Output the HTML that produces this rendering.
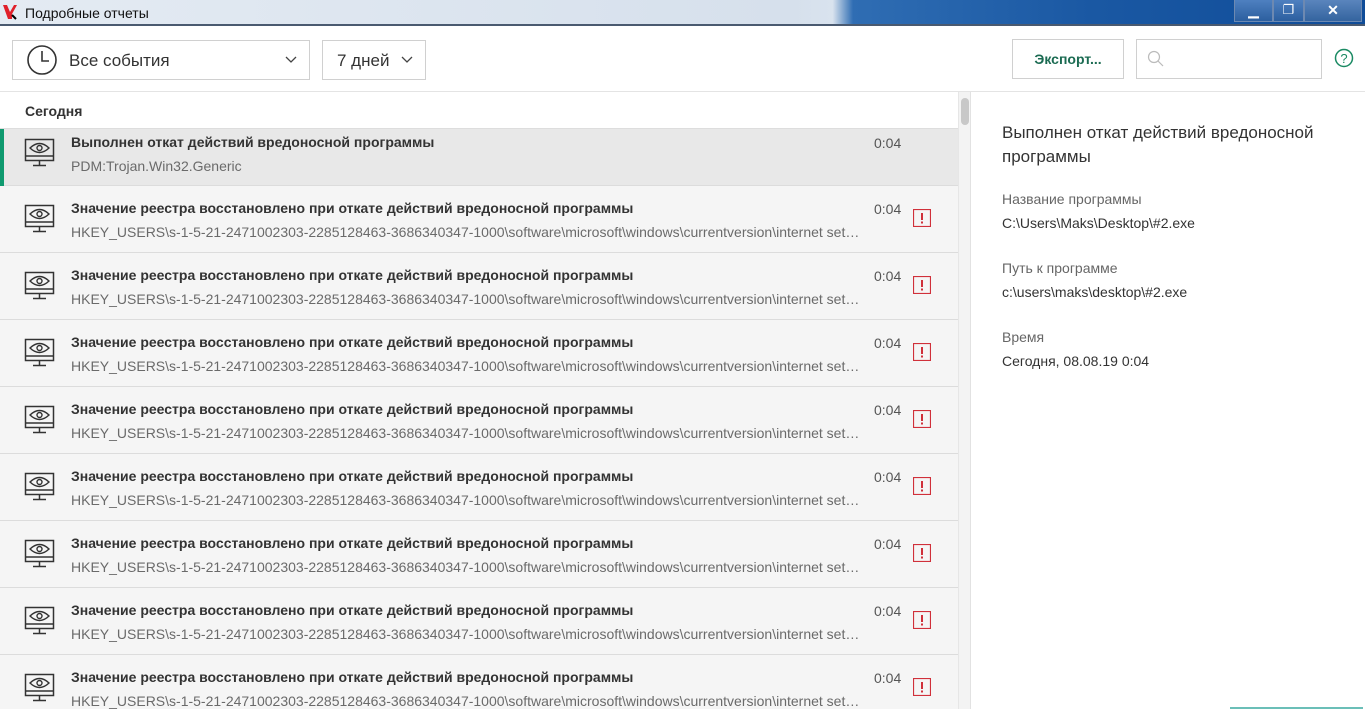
<!DOCTYPE html>
<html><head><meta charset="utf-8"><style>
*{margin:0;padding:0;box-sizing:border-box}
html,body{width:1365px;height:709px;overflow:hidden}
body{background:#fff;font-family:"Liberation Sans",sans-serif;position:relative;color:#333}
.abs{position:absolute}
#title{left:0;top:0;width:1365px;height:26px;background:linear-gradient(90deg,#e4ebf3 0,#d6e0ec 58%,#d9e3ee 61%,#2f6db3 62.5%,#1a58a3 80%,#0f4c98 100%);border-bottom:2px solid #4a5a70}
.wb{top:0;height:22px;border:1px solid #6d89b1;border-top:none;background:linear-gradient(#4e80c0,#2c5f9f);color:#fff;text-align:center;font-size:14px;line-height:20px}
.box{border:1px solid #d0d0d0;background:#fff}
.row{position:absolute;left:0;width:958px;height:67px;background:#f5f5f5;border-bottom:1px solid #dcdcdc}
.t1{position:absolute;left:71px;top:14px;font-size:14px;font-weight:bold;color:#333;white-space:nowrap}
.t2{position:absolute;left:71px;top:38px;font-size:14px;color:#6a6a6a;white-space:nowrap;width:790px;overflow:hidden;text-overflow:ellipsis}
.tm{position:absolute;left:874px;top:15px;font-size:14px;color:#555}
.ex{position:absolute;left:913px;top:23px}
.ic{position:absolute;left:24px;top:17px}
.lbl{font-size:14px;color:#666}
.val{font-size:14px;color:#333}
</style></head><body>
<div id="title" class="abs"></div>
<div class="abs" style="left:2px;top:4px;width:16px;height:16px"><svg width="16" height="16"><path d="M1 1h4l3 7 4-7h3l-5 9v5H6z" fill="#e0202a"/><path d="M10 11l4 4" stroke="#000" stroke-width="2"/></svg></div>
<div class="abs" style="left:25px;top:5px;font-size:14px;color:#111">Подробные отчеты</div>
<div class="abs wb" style="left:1234px;width:39px">▁</div>
<div class="abs wb" style="left:1273px;width:31px;font-size:13px">❐</div>
<div class="abs wb" style="left:1304px;width:58px;background:linear-gradient(#5a85bd,#34649f);font-weight:bold">✕</div>

<div class="abs box" style="left:12px;top:40px;width:298px;height:40px"></div>
<svg class="abs" style="left:26px;top:44px" width="32" height="32"><circle cx="16" cy="16" r="14" fill="none" stroke="#333" stroke-width="1.6"/><path d="M16 7v10h7" fill="none" stroke="#333" stroke-width="1.6"/></svg>
<div class="abs" style="left:69px;top:51px;font-size:17px;color:#333">Все события</div>
<svg class="abs" style="left:285px;top:56px" width="12" height="8"><path d="M1 1l5 5 5-5" fill="none" stroke="#444" stroke-width="1.3"/></svg>
<div class="abs box" style="left:322px;top:40px;width:104px;height:40px"></div>
<div class="abs" style="left:337px;top:51px;font-size:17px;color:#333">7 дней</div>
<svg class="abs" style="left:401px;top:56px" width="12" height="8"><path d="M1 1l5 5 5-5" fill="none" stroke="#444" stroke-width="1.3"/></svg>
<div class="abs box" style="left:1012px;top:39px;width:112px;height:40px;text-align:center;line-height:38px;font-size:14px;color:#1b6b52;font-weight:bold">Экспорт...</div>
<div class="abs box" style="left:1136px;top:39px;width:186px;height:40px"></div>
<svg class="abs" style="left:1147px;top:50px" width="18" height="18"><circle cx="7" cy="7" r="5.5" fill="none" stroke="#bbb" stroke-width="1.2"/><path d="M11 11l5 5" stroke="#bbb" stroke-width="1.2"/></svg>
<svg class="abs" style="left:1334px;top:48px" width="20" height="20"><circle cx="10" cy="10" r="8.5" fill="none" stroke="#1a8a63" stroke-width="1.5"/><text x="10" y="15" text-anchor="middle" font-size="13" fill="#1a8a63" font-family="Liberation Sans">?</text></svg>
<div class="abs" style="left:0;top:91px;width:1365px;height:1px;background:#e4e4e4"></div>

<div class="abs" style="left:25px;top:103px;font-size:14px;font-weight:bold;color:#333">Сегодня</div>
<div class="abs" style="left:958px;top:92px;width:13px;height:617px;background:#f3f3f3;border-left:1px solid #e6e6e6;border-right:1px solid #e2e2e2"></div>
<div class="abs" style="left:961px;top:98px;width:8px;height:27px;background:#c8c8c8;border-radius:4px"></div>

<div class="row" style="top:128px;height:58px;background:#e8e8e8;border-top:1px solid #ddd">
<div class="abs" style="left:0;top:0;width:4px;height:57px;background:#0f9a6f"></div>
<svg class="ic" style="top:8px" width="32" height="32"><rect x="1.5" y="2.5" width="28" height="21" fill="none" stroke="#333" stroke-width="1.5"/><path d="M1.5 19h28M15.5 24v4M9 28.5h13" stroke="#333" stroke-width="1.5"/><path d="M6 11q9.5-9 19 0q-9.5 9-19 0z" fill="none" stroke="#333" stroke-width="1.4"/><circle cx="15.5" cy="11" r="2.5" fill="none" stroke="#333" stroke-width="1.4"/></svg>
<div class="t1" style="top:5px">Выполнен откат действий вредоносной программы</div>
<div class="t2" style="top:29px">PDM:Trojan.Win32.Generic</div>
<div class="tm" style="top:6px">0:04</div>
</div>

<div id="rows"></div>
<script>
var h='';for(var i=0;i<8;i++){var t=186+i*67;h+='<div class="row" style="top:'+t+'px"><svg class="ic" width="32" height="32"><rect x="1.5" y="2.5" width="28" height="21" fill="none" stroke="#333" stroke-width="1.5"/><path d="M1.5 19h28M15.5 24v4M9 28.5h13" stroke="#333" stroke-width="1.5"/><path d="M6 11q9.5-9 19 0q-9.5 9-19 0z" fill="none" stroke="#333" stroke-width="1.4"/><circle cx="15.5" cy="11" r="2.5" fill="none" stroke="#333" stroke-width="1.4"/></svg><div class="t1">Значение реестра восстановлено при откате действий вредоносной программы</div><div class="t2">HKEY_USERS\\s-1-5-21-2471002303-2285128463-3686340347-1000\\software\\microsoft\\windows\\currentversion\\internet settings</div><div class="tm">0:04</div><svg class="ex" width="18" height="18"><rect x="0.5" y="0.5" width="17" height="17" fill="none" stroke="#d0303a" stroke-width="1.2"/><rect x="8" y="4" width="2" height="7" fill="#d0303a"/><rect x="8" y="12.5" width="2" height="2" fill="#d0303a"/></svg></div>';}
document.getElementById('rows').innerHTML=h;
</script>

<div class="abs" style="left:1002px;top:121px;font-size:17px;color:#333;line-height:24px;width:340px">Выполнен откат действий вредоносной программы</div>
<div class="abs lbl" style="left:1002px;top:191px">Название программы</div>
<div class="abs val" style="left:1002px;top:215px">C:\Users\Maks\Desktop\#2.exe</div>
<div class="abs lbl" style="left:1002px;top:260px">Путь к программе</div>
<div class="abs val" style="left:1002px;top:284px">c:\users\maks\desktop\#2.exe</div>
<div class="abs lbl" style="left:1002px;top:329px">Время</div>
<div class="abs val" style="left:1002px;top:353px">Сегодня, 08.08.19 0:04</div>
<div class="abs" style="left:1230px;top:707px;width:133px;height:2px;background:#6bbfb8"></div>
</body></html>
